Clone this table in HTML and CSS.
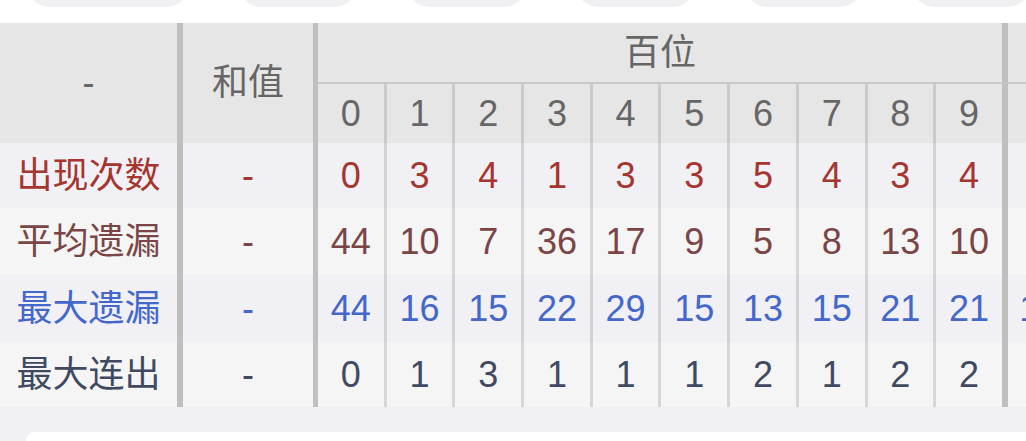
FILE: index.html
```html
<!DOCTYPE html>
<html lang="zh">
<head>
<meta charset="utf-8">
<title>走势统计</title>
<link rel="stylesheet" href="styles.css">
</head>
<body>
<div class="tabs">
  <div class="tab t1"></div>
  <div class="tab t2"></div>
  <div class="tab t3"></div>
  <div class="tab t4"></div>
  <div class="tab t5"></div>
  <div class="tab t6"></div>
</div>
<div class="scroller">
  <div class="grid">
    <div class="h corner">-</div>
    <div class="h sum">和值</div>
    <div class="h group">百位</div>
    <div class="h group next"></div>

    <div class="h d">0</div><div class="h d">1</div><div class="h d">2</div><div class="h d">3</div><div class="h d">4</div>
    <div class="h d">5</div><div class="h d">6</div><div class="h d">7</div><div class="h d">8</div><div class="h d end">9</div>
    <div class="h d"></div>

    <div class="c lab r1">出现次数</div><div class="c s r1">-</div>
    <div class="c d r1">0</div><div class="c d r1">3</div><div class="c d r1">4</div><div class="c d r1">1</div><div class="c d r1">3</div>
    <div class="c d r1">3</div><div class="c d r1">5</div><div class="c d r1">4</div><div class="c d r1">3</div><div class="c d r1 end">4</div>
    <div class="c d r1"></div>

    <div class="c lab r2">平均遗漏</div><div class="c s r2">-</div>
    <div class="c d r2">44</div><div class="c d r2">10</div><div class="c d r2">7</div><div class="c d r2">36</div><div class="c d r2">17</div>
    <div class="c d r2">9</div><div class="c d r2">5</div><div class="c d r2">8</div><div class="c d r2">13</div><div class="c d r2 end">10</div>
    <div class="c d r2"></div>

    <div class="c lab r3">最大遗漏</div><div class="c s r3">-</div>
    <div class="c d r3">44</div><div class="c d r3">16</div><div class="c d r3">15</div><div class="c d r3">22</div><div class="c d r3">29</div>
    <div class="c d r3">15</div><div class="c d r3">13</div><div class="c d r3">15</div><div class="c d r3">21</div><div class="c d r3 end">21</div>
    <div class="c d r3">18</div>

    <div class="c lab r4">最大连出</div><div class="c s r4">-</div>
    <div class="c d r4">0</div><div class="c d r4">1</div><div class="c d r4">3</div><div class="c d r4">1</div><div class="c d r4">1</div>
    <div class="c d r4">1</div><div class="c d r4">2</div><div class="c d r4">1</div><div class="c d r4">2</div><div class="c d r4 end">2</div>
    <div class="c d r4"></div>
  </div>
</div>
<div class="footer">
  <div class="card"></div>
</div>
</body>
</html>
```
FILE: styles.css
```css
* { box-sizing: border-box; }

html, body {
  margin: 0;
  padding: 0;
  background: #ffffff;
  overflow: hidden;
}

body {
  width: 1026px;
  height: 441px;
  font-family: "Liberation Sans", "Noto Sans CJK SC", sans-serif;
  font-size: 36px;
}

.tabs {
  height: 23px;
  display: flex;
  gap: 48px;
  padding-left: 26px;
  overflow: hidden;
}

.tab {
  flex: none;
  height: 48px;
  margin-top: -41px;
  border-radius: 24px;
  background: #f0f0f2;
}
.t1 { width: 164px; }
.t2 { width: 120px; }
.t3 { width: 121px; }
.t4 { width: 121px; }
.t5 { width: 119px; }
.t6 { width: 120px; }

.scroller {
  width: 1026px;
  overflow: hidden;
}

.grid {
  display: grid;
  width: max-content;
  grid-template-columns: 183px 135px repeat(9, 68.7px) 71.7px 66px;
  grid-template-rows: 61px 59px 65px 67px 67px 65px;
}

.grid > div {
  display: flex;
  align-items: center;
  justify-content: center;
  line-height: 1;
  white-space: nowrap;
}

.h {
  background: #e6e6e6;
  color: #666666;
}

.corner {
  grid-row: 1 / 3;
  border-right: 6px solid #bfbfbf;
}

.sum {
  grid-row: 1 / 3;
  border-right: 5px solid #bfbfbf;
}

.group {
  grid-column: span 10;
  border-bottom: 2px solid #c9c9c9;
  border-right: 6px solid #bfbfbf;
}

.group.next {
  grid-column: span 1;
  border-right: 0;
}

.d {
  border-right: 3px solid rgba(0, 0, 0, 0.12);
}

.d.end {
  border-right: 6px solid #bfbfbf;
}

.lab {
  border-right: 6px solid #bfbfbf;
}

.s {
  border-right: 5px solid #bfbfbf;
}

.r1 { background: #f0f0f5; color: #a5352f; }
.r2 { background: #f5f5f5; color: #7a4545; }
.r3 { background: #f0f0f5; color: #4467cb; }
.r4 { background: #f5f5f5; color: #3f4a62; }

.footer {
  height: 34px;
  background: #f0f0f5;
  padding: 25px 0 0 26px;
}

.card {
  height: 9px;
  background: #ffffff;
  border-radius: 16px 0 0 0;
}
```
